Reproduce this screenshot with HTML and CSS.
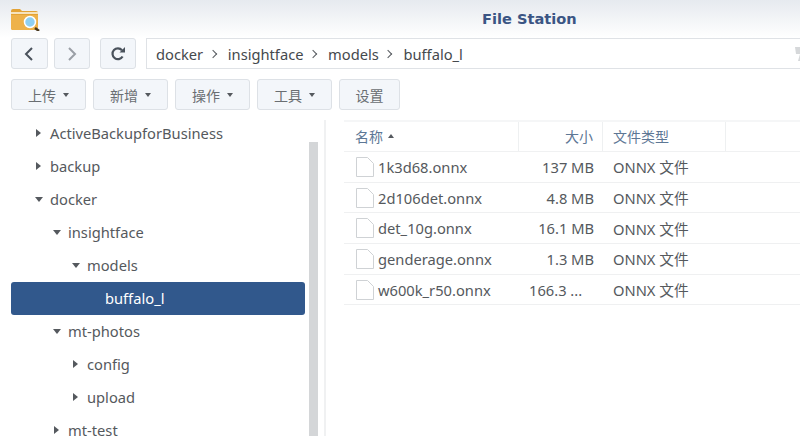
FILE: index.html
```html
<!DOCTYPE html>
<html>
  <head>
    <meta charset="UTF-8" />
    <title>File Station</title>
    <link rel="stylesheet" href="styles.css">
  </head>
  <body>
    <div class="app">
      <div class="title-bar">
        <svg class="app-icon" width="30" height="24" viewBox="0 0 30 24">
          <path d="M1 4q0-2 2-2h7l2 2h14q2 0 2 2v15q0 2-2 2H3q-2 0-2-2z" fill="#e3a336" />
          <path d="M1 8h27v13q0 2-2 2H3q-2 0-2-2z" fill="#eeb24a" />
          <path d="M1 5h27v2H1z" fill="#f6e3bd" />
          <path d="M25 21l4 3" stroke="#4a3a20" stroke-width="2.5" />
          <circle cx="20" cy="15" r="5.5" fill="#8fd0f2" stroke="#fff" stroke-width="1.5" />
        </svg>
        <div class="app-title">File Station</div>
      </div>

      <div class="nav-row">
        <button class="tool-btn nav-btn">
          <svg width="12" height="16" viewBox="0 0 12 16"><path d="M9 2L3 8l6 6" fill="none" stroke="#4a525c" stroke-width="2" /></svg>
        </button>
        <button class="tool-btn nav-btn">
          <svg width="12" height="16" viewBox="0 0 12 16"><path d="M3 2l6 6-6 6" fill="none" stroke="#9a9fa6" stroke-width="2" /></svg>
        </button>
        <button class="tool-btn nav-btn refresh">
          <svg width="16" height="16" viewBox="0 0 16 16"><path d="M12.6 10.5A5.4 5.4 0 1 1 12 4.2" fill="none" stroke="#4a525c" stroke-width="2.2" /><path d="M9.5 6.5h5.5V1z" fill="#4a525c" /></svg>
        </button>
        <div class="path-bar">
          <span>docker</span><span class="sep"></span>
          <span>insightface</span><span class="sep"></span>
          <span>models</span><span class="sep"></span>
          <span>buffalo_l</span>
          <svg class="path-end" width="5" height="14" viewBox="0 0 5 14"><path d="M0 0h5v14H3L5 7H1z" fill="#d6d8da" /></svg>
        </div>
      </div>

      <div class="action-row">
        <button class="tool-btn action-btn">上传<i class="caret"></i></button>
        <button class="tool-btn action-btn">新增<i class="caret"></i></button>
        <button class="tool-btn action-btn">操作<i class="caret"></i></button>
        <button class="tool-btn action-btn">工具<i class="caret"></i></button>
        <button class="tool-btn action-btn plain">设置</button>
      </div>

      <div class="main">
        <div class="tree-pane">
          <ul class="tree">
            <li class="node lvl0 closed">ActiveBackupforBusiness</li>
            <li class="node lvl0 closed">backup</li>
            <li class="node lvl0 open">docker</li>
            <li class="node lvl1 open">insightface</li>
            <li class="node lvl2 open">models</li>
            <li class="node lvl3 selected">buffalo_l</li>
            <li class="node lvl1 open">mt-photos</li>
            <li class="node lvl2 closed">config</li>
            <li class="node lvl2 closed">upload</li>
            <li class="node lvl1 closed">mt-test</li>
          </ul>
          <div class="tree-scroll"></div>
        </div>

        <div class="file-pane">
          <div class="file-head">
            <div class="col-name head-cell">名称<i class="sort-up"></i></div>
            <div class="col-size head-cell">大小</div>
            <div class="col-type head-cell">文件类型</div>
            <div class="col-rest head-cell"></div>
          </div>
          <div class="file-row">
            <div class="col-name"><svg class="file-icon" width="18" height="20" viewBox="0 0 18 20"><path d="M.5.5h11l6 6v13H.5z" fill="#fff" stroke="#cfd2d5" /></svg>1k3d68.onnx</div>
            <div class="col-size">137 MB</div>
            <div class="col-type">ONNX 文件</div>
          </div>
          <div class="file-row">
            <div class="col-name"><svg class="file-icon" width="18" height="20" viewBox="0 0 18 20"><path d="M.5.5h11l6 6v13H.5z" fill="#fff" stroke="#cfd2d5" /></svg>2d106det.onnx</div>
            <div class="col-size">4.8 MB</div>
            <div class="col-type">ONNX 文件</div>
          </div>
          <div class="file-row">
            <div class="col-name"><svg class="file-icon" width="18" height="20" viewBox="0 0 18 20"><path d="M.5.5h11l6 6v13H.5z" fill="#fff" stroke="#cfd2d5" /></svg>det_10g.onnx</div>
            <div class="col-size">16.1 MB</div>
            <div class="col-type">ONNX 文件</div>
          </div>
          <div class="file-row">
            <div class="col-name"><svg class="file-icon" width="18" height="20" viewBox="0 0 18 20"><path d="M.5.5h11l6 6v13H.5z" fill="#fff" stroke="#cfd2d5" /></svg>genderage.onnx</div>
            <div class="col-size">1.3 MB</div>
            <div class="col-type">ONNX 文件</div>
          </div>
          <div class="file-row">
            <div class="col-name"><svg class="file-icon" width="18" height="20" viewBox="0 0 18 20"><path d="M.5.5h11l6 6v13H.5z" fill="#fff" stroke="#cfd2d5" /></svg>w600k_r50.onnx</div>
            <div class="col-size trunc">166.3 ...</div>
            <div class="col-type">ONNX 文件</div>
          </div>
        </div>
      </div>
    </div>
  </body>
</html>
```
FILE: styles.css
```css
* {
  box-sizing: border-box;
}

html,
body {
  height: 100%;
}

body {
  margin: 0;
  overflow: hidden;
  background-color: #fff;
  color: #55595d;
  font-family: "Noto Sans", "Noto Sans CJK SC", sans-serif;
  font-size: 14.7px;
}

.app {
  height: 436px;
  overflow: hidden;
  background: linear-gradient(to bottom, #e6eaef 0, #fff 38px, #fff 100%);
}

.title-bar {
  height: 38px;
  padding: 7px 0 0 10px;
  display: flex;
}

.app-icon {
  flex: none;
}

.app-title {
  margin-left: 442px;
  margin-top: 3px;
  font-family: "DejaVu Sans", sans-serif;
  font-size: 14.6px;
  font-weight: bold;
  color: #3b5584;
}

.nav-row {
  display: flex;
  height: 31px;
  padding-left: 11px;
}

.tool-btn {
  height: 31px;
  padding: 0;
  border: 1px solid #dde1e6;
  border-radius: 3px;
  background-color: #f3f6fa;
  color: #5f6468;
  font-family: inherit;
  font-size: 14px;
  display: flex;
  align-items: center;
  justify-content: center;
}

.nav-btn {
  width: 36.5px;
  margin-right: 6px;
}

.refresh {
  margin-left: 3.5px;
  margin-right: 10px;
}

.path-bar {
  flex: 1;
  display: flex;
  align-items: center;
  padding-left: 9px;
  border: 1px solid #dfe2e6;
  border-right: none;
  color: #45494d;
}

.sep {
  width: 6px;
  height: 6px;
  margin: 0 12px 0 6.6px;
  border-top: 1.5px solid #55595e;
  border-right: 1.5px solid #55595e;
  transform: rotate(45deg);
}

.path-end {
  margin-left: auto;
}

.action-row {
  display: flex;
  gap: 7px;
  padding: 10px 0 0 11px;
}

.action-btn {
  width: 75px;
  color: #6a6e72;
}

.action-btn.plain {
  width: 61px;
}

.caret {
  width: 0;
  height: 0;
  margin-left: 7px;
  border-left: 3.5px solid transparent;
  border-right: 3.5px solid transparent;
  border-top: 4px solid #55595e;
}

.main {
  display: flex;
  height: 326px;
}

.tree-pane {
  position: relative;
  width: 326px;
  flex: none;
  border-right: 2px solid #f0f1f2;
  margin-top: 10px;
}

.tree {
  list-style: none;
  margin: -3px 0 0;
  padding: 0;
}

.node {
  position: relative;
  height: 33px;
  margin: 0 19px 0 11px;
  line-height: 33px;
  white-space: nowrap;
}

.lvl0 {
  padding-left: 39px;
}

.lvl1 {
  padding-left: 57px;
}

.lvl2 {
  padding-left: 76px;
}

.lvl3 {
  padding-left: 94px;
}

.node::before {
  content: "";
  position: absolute;
  top: 12px;
}

.lvl0::before {
  left: 24px;
}

.lvl1::before {
  left: 42px;
}

.lvl2::before {
  left: 61px;
}

.closed::before {
  margin-left: 1px;
  border-top: 4.5px solid transparent;
  border-bottom: 4.5px solid transparent;
  border-left: 5px solid #55595e;
}

.open::before {
  top: 14px;
  border-left: 4.5px solid transparent;
  border-right: 4.5px solid transparent;
  border-top: 5px solid #55595e;
}

.selected {
  background-color: #31588c;
  border-radius: 3px;
  color: #fff;
}

.tree-scroll {
  position: absolute;
  top: 22px;
  left: 309px;
  width: 9px;
  height: 300px;
  background-color: #d4d6d8;
}

.file-pane {
  flex: 1;
  padding: 10px 0 0 18px;
}

.file-head,
.file-row {
  display: flex;
  align-items: center;
}

.file-head {
  height: 32px;
  border-top: 2px solid #f5f6f7;
  border-bottom: 1px solid #f0f1f2;
}

.head-cell {
  height: 100%;
  padding-bottom: 2px;
  display: flex;
  align-items: center;
  border-right: 1px solid #eef0f1;
  color: #5d7795;
  font-size: 14px;
}

.file-row {
  height: 30.7px;
  border-bottom: 1px solid #eff0f1;
}

.col-name {
  width: 175px;
  padding-left: 11px;
  display: flex;
  align-items: center;
  flex: none;
}

.file-row .col-name {
  padding-left: 12px;
}

.col-size {
  width: 84px;
  padding-right: 9px;
  justify-content: flex-end;
  text-align: right;
  flex: none;
}

.col-size.trunc {
  text-align: left;
  padding-left: 10px;
}

.col-type {
  width: 123px;
  padding-left: 10px;
  flex: none;
}

.col-rest {
  flex: 1;
  border-right: none;
}

.file-icon {
  margin-right: 4px;
  flex: none;
}

.sort-up {
  width: 0;
  height: 0;
  margin-left: 5px;
  border-left: 3.5px solid transparent;
  border-right: 3.5px solid transparent;
  border-bottom: 4px solid #55595e;
}
```
